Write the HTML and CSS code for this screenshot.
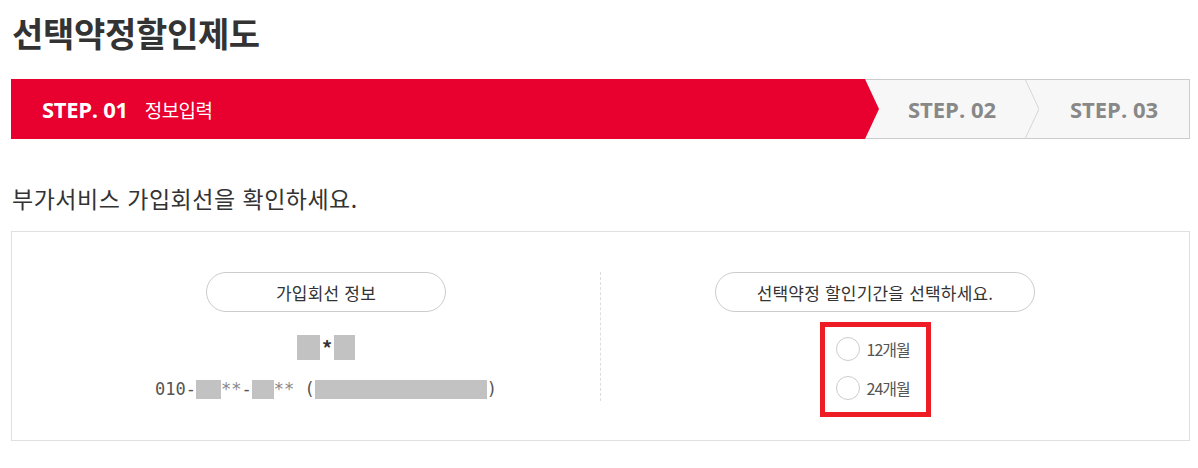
FILE: index.html
```html
<!DOCTYPE html>
<html lang="ko">
<head>
<meta charset="utf-8">
<title>선택약정할인제도</title>
<link rel="stylesheet" href="styles.css">
</head>
<body>
<div class="page">
  <h1 class="title">선택약정할인제도</h1>
  <div class="steps">
    <div class="step-active">
      <span class="step-num">STEP. 01</span>
      <span class="step-name">정보입력</span>
    </div>
    <div class="step-rest">
      <div class="step step-2">STEP. 02</div>
      <svg class="chevron" width="14" height="60" viewBox="0 0 14 60"><polyline points="0,0 14,30 0,60" fill="none" stroke="#d6d6d6" stroke-width="1"/></svg>
      <div class="step step-3">STEP. 03</div>
    </div>
  </div>
  <p class="subtitle">부가서비스 가입회선을 확인하세요.</p>
  <div class="box">
    <div class="col col-left">
      <div class="pill pill-left">가입회선 정보</div>
      <div class="name-line">
        <span class="mask mask-n1"></span><span class="star">*</span><span class="mask mask-n2"></span>
      </div>
      <div class="phone-line">
        <span class="mono">010-</span><span class="mask mask-p1"></span><span class="mono light">**</span><span class="mono">-</span><span class="mask mask-p2"></span><span class="mono light">**</span><span class="mono">&nbsp;(</span><span class="mask mask-p3"></span><span class="mono">)</span>
      </div>
    </div>
    <div class="divider"></div>
    <div class="col col-right">
      <div class="pill pill-right">선택약정 할인기간을 선택하세요.</div>
      <div class="radio-group">
        <label class="radio-row"><span class="radio"></span><span class="radio-label">12개월</span></label>
        <label class="radio-row"><span class="radio"></span><span class="radio-label">24개월</span></label>
      </div>
    </div>
  </div>
</div>
</body>
</html>
```
FILE: styles.css
```css
* { box-sizing: border-box; }
html, body { margin: 0; padding: 0; background: #fff; }
body {
  font-family: "Noto Sans CJK KR", "Noto Sans", sans-serif;
  color: #333;
}
.page {
  width: 1198px;
  padding: 13px 8px 0 11px;
}
.title {
  margin: 0;
  font-size: 34px;
  line-height: 40px;
  font-weight: 700;
  letter-spacing: -0.3px;
  color: #333;
  padding-left: 1px;
}
.steps {
  margin-top: 26px;
  display: flex;
  height: 60px;
  width: 1179px;
}
.step-active {
  position: relative;
  z-index: 1;
  width: 868px;
  margin-right: -14px;
  background: #e8002e;
  clip-path: polygon(0 0, 854px 0, 868px 50%, 854px 100%, 0 100%);
  display: flex;
  align-items: center;
  padding-left: 31px;
  color: #fff;
}
.step-num {
  font-family: "Open Sans", "Noto Sans", sans-serif;
  font-weight: 700;
  font-size: 22px;
  letter-spacing: -0.3px;
}
.step-name {
  margin-left: 17px;
  font-size: 19px;
  letter-spacing: -0.6px;
}
.step-rest {
  flex: 1;
  display: flex;
  background: #f7f7f7;
  border-top: 1px solid #cccccc;
  border-bottom: 1px solid #cccccc;
  border-right: 1px solid #cccccc;
  padding-left: 14px;
}
.chevron {
  display: block;
  margin-top: -1px;
  flex: none;
}
.step {
  display: flex;
  align-items: center;
  justify-content: center;
  font-family: "Open Sans", "Noto Sans", sans-serif;
  font-weight: 700;
  font-size: 22px;
  letter-spacing: 0;
  color: #888;
}
.step-2 { width: 146px; }
.step-3 { flex: 1; }
.subtitle {
  margin: 44px 0 0 0;
  font-size: 23px;
  line-height: 30px;
  letter-spacing: 0.5px;
  color: #333;
  padding-left: 1px;
}
.box {
  margin-top: 18px;
  width: 1179px;
  border: 1px solid #e0e0e0;
  padding: 40px 40px 23px 40px;
  display: grid;
  grid-template-columns: 1fr 1px 1fr;
  align-items: start;
}
.col {
  display: flex;
  flex-direction: column;
  align-items: center;
}
.divider {
  height: 129px;
  border-left: 1px dashed #dddddd;
}
.pill {
  height: 40px;
  border: 1px solid #cccccc;
  border-radius: 20px;
  display: flex;
  align-items: center;
  justify-content: center;
  font-size: 17px;
  letter-spacing: 0.2px;
  color: #333;
}
.pill-left { width: 240px; }
.pill-right { width: 320px; }
.name-line {
  margin-top: 23px;
  height: 25px;
  display: flex;
  align-items: stretch;
}
.mask {
  display: inline-block;
  background: #c2c2c2;
}
.mask-n1 { width: 23px; }
.mask-n2 { width: 21px; }
.star {
  width: 14px;
  text-align: center;
  font-weight: 700;
  font-size: 20px;
  line-height: 25px;
  color: #333;
}
.phone-line {
  margin-top: 18px;
  height: 23px;
  display: flex;
  align-items: center;
}
.mono {
  font-family: "DejaVu Sans Mono", "Liberation Mono", monospace;
  font-size: 17px;
  line-height: 23px;
  color: #555;
  white-space: pre;
}
.mono.light { color: #888; }
.mask-p1 { width: 25px; height: 19px; }
.mask-p2 { width: 22px; height: 19px; }
.mask-p3 { width: 172px; height: 19px; }
.radio-group {
  margin-top: 10px;
  width: 111px;
  border: 5px solid #ee1c25;
  padding: 10px 0 12px 11px;
  display: flex;
  flex-direction: column;
  gap: 15px;
}
.radio-row {
  display: flex;
  align-items: center;
  gap: 7px;
  height: 24px;
}
.radio {
  width: 24px;
  height: 24px;
  border: 1px solid #cccccc;
  border-radius: 50%;
  background: #fff;
  flex: none;
}
.radio-label {
  font-size: 16px;
  letter-spacing: -1px;
  color: #555;
}
```
